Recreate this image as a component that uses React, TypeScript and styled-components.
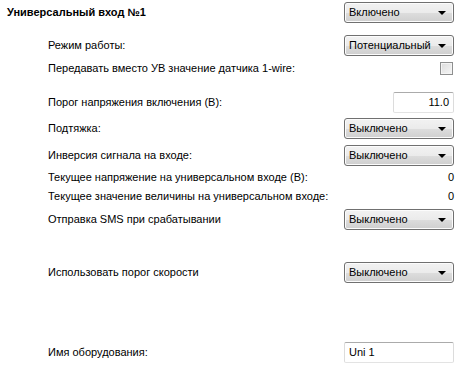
import * as React from 'react';
import styled, { createGlobalStyle } from 'styled-components';

const GlobalStyle = createGlobalStyle`
  html, body {
    margin: 0;
    padding: 0;
    background: #ffffff;
  }
  body {
    font-family: 'Liberation Sans', Arial, sans-serif;
    font-size: 11px;
    color: #000000;
  }
`;

type RowProps = { $top: number; $h: number };

const Form = styled.div`
  width: 463px;
  display: flex;
  flex-direction: column;
  padding: 0 9px 0 0;
  box-sizing: border-box;
`;

const Row = styled.div<RowProps>`
  display: flex;
  align-items: center;
  justify-content: space-between;
  margin-top: ${({ $top }) => $top}px;
  height: ${({ $h }) => $h}px;
`;

const Title = styled.div`
  padding-left: 7px;
  font-weight: bold;
`;

const Label = styled.div`
  padding-left: 48px;
  white-space: nowrap;
`;

const Value = styled.div`
  width: 110px;
  text-align: right;
`;

const SelectBox = styled.div`
  width: 110px;
  height: 21px;
  box-sizing: border-box;
  border: 1px solid #707070;
  border-radius: 3px;
  background: linear-gradient(#f2f2f2 0%, #ebebeb 50%, #dddddd 51%, #cfcfcf 100%);
  display: flex;
  align-items: center;
  padding: 0 0 0 4px;
  box-shadow: inset 0 0 0 1px #fcfcfc;
`;

const SelectText = styled.span`
  flex: 1;
  white-space: nowrap;
  overflow: hidden;
`;

const Arrow = styled.span`
  width: 0;
  height: 0;
  margin: 1px 7px 0 4px;
  border-left: 4px solid transparent;
  border-right: 4px solid transparent;
  border-top: 4px solid #000000;
`;

const TextInput = styled.div<{ $w: number; $right?: boolean }>`
  width: ${({ $w }) => $w}px;
  height: 21px;
  box-sizing: border-box;
  border: 1px solid #dcdcdc;
  border-top-color: #ababab;
  border-bottom-color: #e3e3e3;
  border-radius: 2px;
  display: flex;
  align-items: center;
  justify-content: ${({ $right }) => ($right ? 'flex-end' : 'flex-start')};
  padding: 0 4px;
  background: #ffffff;
`;

const Check = styled.span`
  width: 13px;
  height: 13px;
  box-sizing: border-box;
  border: 1px solid #8e8f8f;
  background: linear-gradient(135deg, #dcdcdc, #f6f6f6);
  box-shadow: inset 0 0 0 1px #f4f4f4;
  margin-right: 1px;
`;

const Select: React.FC<{ value: string }> = ({ value }) => (
  <SelectBox>
    <SelectText>{value}</SelectText>
    <Arrow />
  </SelectBox>
);

const App: React.FC = () => {
  return (
    <>
      <GlobalStyle />
      <Form>
        <Row $top={1} $h={22}>
          <Title>Универсальный вход №1</Title>
          <Select value="Включено" />
        </Row>
        <Row $top={11} $h={22}>
          <Label>Режим работы:</Label>
          <Select value="Потенциальный" />
        </Row>
        <Row $top={1} $h={22}>
          <Label>Передавать вместо УВ значение датчика 1-wire:</Label>
          <Check />
        </Row>
        <Row $top={12} $h={22}>
          <Label>Порог напряжения включения (В):</Label>
          <TextInput $w={61} $right>
            11.0
          </TextInput>
        </Row>
        <Row $top={4} $h={22}>
          <Label>Подтяжка:</Label>
          <Select value="Выключено" />
        </Row>
        <Row $top={5} $h={22}>
          <Label>Инверсия сигнала на входе:</Label>
          <Select value="Выключено" />
        </Row>
        <Row $top={2} $h={18}>
          <Label>Текущее напряжение на универсальном входе (В):</Label>
          <Value>0</Value>
        </Row>
        <Row $top={1} $h={18}>
          <Label>Текущее значение величины на универсальном входе:</Label>
          <Value>0</Value>
        </Row>
        <Row $top={3} $h={22}>
          <Label>Отправка SMS при срабатывании</Label>
          <Select value="Выключено" />
        </Row>
        <Row $top={31} $h={22}>
          <Label>Использовать порог скорости</Label>
          <Select value="Выключено" />
        </Row>
        <Row $top={58} $h={22}>
          <Label>Имя оборудования:</Label>
          <TextInput $w={110}>Uni 1</TextInput>
        </Row>
      </Form>
    </>
  );
};

export default App;
